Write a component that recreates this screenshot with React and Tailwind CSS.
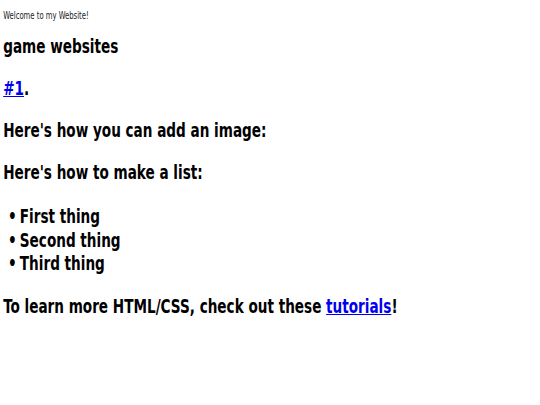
export default function App() {
  return (
    <div className="min-h-[405px] bg-white overflow-hidden">
      <div className="w-[680px] origin-left scale-x-[0.795] px-1 text-black font-['DejaVu_Sans_Condensed','DejaVu_Sans',sans-serif]">
        <p className="pt-[10px] text-[9.6px] leading-[11px] text-[#222]">Welcome to my Website!</p>
        <div className="font-bold text-[19px] leading-[23px]">
          <p className="mt-[14px]">game websites</p>
          <p className="mt-[19px]">
            <a href="#" className="text-[#0000ee] underline">#1</a>.
          </p>
          <p className="mt-[19px]">Here's how you can add an image:</p>
          <p className="mt-[19px]">Here's how to make a list:</p>
          <ul className="mt-[21px] pl-[6px] leading-[23.5px]">
            {["First thing", "Second thing", "Third thing"].map((t) => (
              <li key={t}>
                <span className="mr-[4px]">•</span>
                {t}
              </li>
            ))}
          </ul>
          <p className="mt-[19px]">
            To learn more HTML/CSS, check out these{" "}
            <a href="#" className="text-[#0000ee] underline">tutorials</a>!
          </p>
        </div>
      </div>
    </div>
  );
}
